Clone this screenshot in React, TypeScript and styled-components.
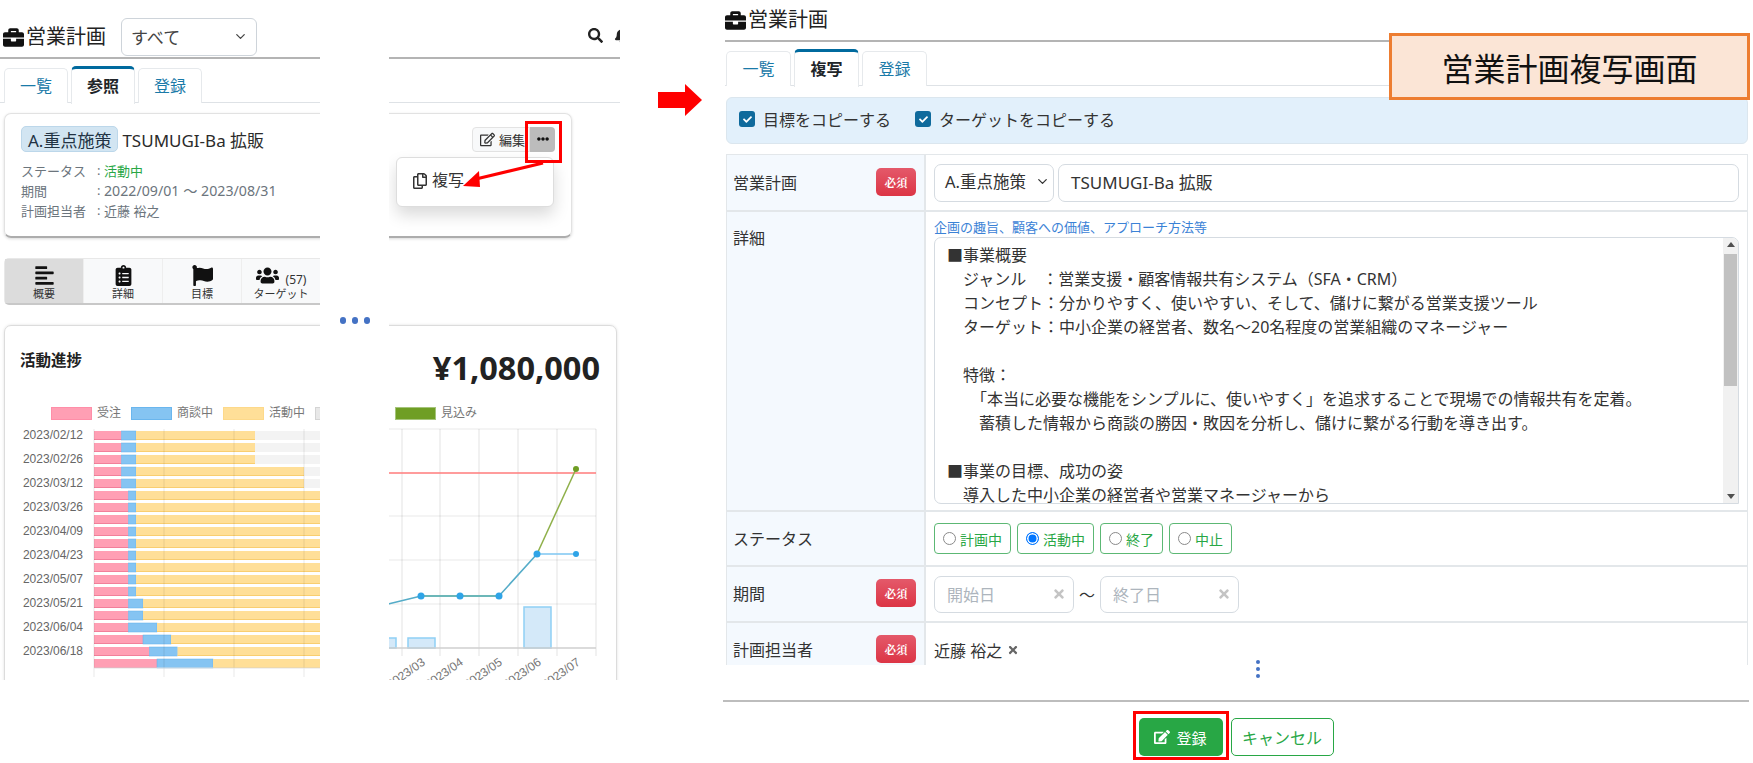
import React from "react";
import styled, { createGlobalStyle } from "styled-components";
import { ChevronDown } from "lucide-react";
import {
  FaBriefcase, FaSearch, FaBell, FaRegEdit, FaEllipsisH, FaRegCopy, FaAlignLeft,
  FaClipboardList, FaFlag, FaUsers, FaTimes, FaEdit, FaCheck,
} from "react-icons/fa";

const sans = `"Noto Sans", "Noto Sans CJK JP", sans-serif`;

const Global = createGlobalStyle`
  html, body { margin: 0; padding: 0; background: #fff; }
  body { font-family: ${sans}; color: #212529; width: 1753px; height: 763px; overflow: hidden; }
  * { box-sizing: border-box; }
`;

const Page = styled.div`
  position: relative; display: flex; align-items: flex-start; width: 1753px; height: 763px; overflow: hidden;
`;
const LeftScreen = styled.section`
  width: 620px; height: 680px; flex: none; overflow: hidden;
`;
const RightScreen = styled.section`
  width: 1025px; margin-left: 105px; flex: none;
`;

const Header = styled.header<{ $h: number; $pt?: number }>`
  height: ${(p) => p.$h}px; display: flex; align-items: center; border-bottom: 2px solid #b4b4b4; position: relative;
  padding-top: ${(p) => p.$pt ?? 0}px;
`;
const LeftTitleSlot = styled.div`
  margin-left: 3px;
`;
const Title = styled.h1`
  margin: 0; display: flex; align-items: center; gap: 2px; font-size: 20px; font-weight: 400; line-height: 24px; color: #222;
  svg { font-size: 21px; color: #111; }
`;
const Select = styled.div`
  margin-left: 15px; width: 136px; height: 38px; border: 1px solid #ced4da; border-radius: 6px; display: flex; align-items: center;
  justify-content: space-between; padding: 0 8px 2px 9px; font-size: 17px; color: #444;
`;
const HeaderIcons = styled.div`
  position: absolute; right: -9px; top: 28px; display: flex; gap: 11px; font-size: 15px; color: #222;
`;
const Tabs = styled.nav<{ $top: number; $left: number; $w: number }>`
  display: flex; gap: 3px; margin-top: ${(p) => p.$top}px; padding-left: ${(p) => p.$left}px;
  border-bottom: 1px solid #dee2e6; height: 35px;
  & > * { width: ${(p) => p.$w}px; }
`;
const Tab = styled.div<{ $active?: boolean }>`
  height: 35px; display: flex; align-items: center; justify-content: center; font-size: 16px; background: #fff; padding-bottom: 3px;
  border: 1px solid #e6e9ec; border-bottom: none; border-radius: 5px 5px 0 0;
  ${(p) => p.$active
    ? `color:#212529;font-weight:700;border-top:3px solid #006a9e;margin-top:-2px;height:38px;`
    : `color:#1a7aa8;`}
`;

const Card = styled.div`
  position: relative; margin: 10px 0 0 4px; width: 568px; height: 125px; padding: 12px 16px;
  border: 1px solid #e2e2e2; border-bottom: 2px solid #adadad; border-radius: 7px; box-shadow: 0 1px 3px rgba(0,0,0,.15);
`;
const CardTop = styled.div`
  display: flex; align-items: center; height: 26px;
`;
const Category = styled.span`
  height: 26px; padding: 0 6px; display: flex; align-items: center; background: #d2e5f2; border: 1px solid #bcd7ea;
  border-radius: 5px; font-size: 17px; color: #234; margin-right: 4px;
`;
const PlanName = styled.span`
  font-size: 17px; color: #2b2b2b;
`;
const CardActions = styled.div`
  margin-left: auto; display: flex; height: 25px; align-items: stretch;
`;
const EditButton = styled.span`
  width: 58px; display: flex; align-items: center; gap: 4px; padding-left: 7px; background: #f8f9fa; border: 1px solid #e3e3e3;
  border-radius: 4px 0 0 4px; font-size: 13px; color: #333; white-space: nowrap; overflow: hidden;
  svg { font-size: 15px; flex: none; }
`;
const MoreButton = styled.span`
  width: 25px; display: flex; align-items: center; justify-content: center; background: #bcbcbc; border-radius: 0 4px 4px 0; color: #111; font-size: 12px;
`;
const MetaGrid = styled.dl`
  margin: 8px 0 0; display: grid; grid-template-columns: 76px 7px 1fr; grid-auto-rows: 20px; align-items: center; font-size: 13px; color: #6c757d;
  dt, dd { margin: 0; white-space: nowrap; }
`;
const Active = styled.span`
  color: #28a745;
`;
const DateRange = styled.span`
  font-size: 14.2px;
`;
const Menu = styled.div`
  position: absolute; left: 391px; top: 43px; width: 158px; height: 50px; background: #fff; border: 1px solid #ddd; border-radius: 6px;
  box-shadow: 0 8px 16px rgba(0,0,0,.15); display: flex; align-items: flex-start; gap: 4px; padding: 13px 15px; font-size: 16px; line-height: 18px; color: #333;
  svg { font-size: 16px; margin-top: 2px; }
`;

const MetricBar = styled.div`
  margin: 20px 0 0 4px; width: 330px; height: 47px; display: flex; background: #f8f9fa; border: 1px solid #e8e8e8; border-bottom: 2px solid #c8c8c8; border-radius: 5px;
`;
const MetricItem = styled.div<{ $active?: boolean }>`
  width: 79px; display: flex; flex-direction: column; align-items: center; padding-top: 6px; font-size: 11px; line-height: 14px; color: #333;
  background: ${(p) => (p.$active ? "#dcdcdc" : "transparent")};
  border-right: 1px solid #eee;
  svg { font-size: 21px; color: #111; margin-bottom: 1px; }
`;
const MetricIconLine = styled.span`
  height: 22px; display: flex; align-items: flex-end; gap: 7px; font-size: 12px; color: #333; svg { font-size: 23px; margin-bottom: 0; }
`;

const ChartCard = styled.div`
  margin: 20px 0 0 4px; width: 613px; height: 400px; border: 1px solid #dcdcdc; border-radius: 7px; box-shadow: 0 0 3px rgba(0,0,0,.12);
`;
const ChartHead = styled.div`
  display: flex; justify-content: space-between; align-items: flex-start; padding: 22px 16px 0 15px;
`;
const ChartTitle = styled.h2`
  margin: 2px 0 0; font-size: 15.5px; line-height: 20px; font-weight: 700; color: #222;
`;
const Amount = styled.div`
  font-family: "Open Sans", "Noto Sans", sans-serif; font-size: 32.5px; line-height: 40px; font-weight: 700; color: #222;
`;
const Legend = styled.div`
  display: flex; gap: 10px; margin: 18px 0 4px 46px; height: 14px; white-space: nowrap;
`;
const LegendItem = styled.span`
  display: flex; align-items: center; gap: 5px; font-size: 12px; line-height: 14px; color: #777;
`;
const Swatch = styled.i<{ $bg: string; $bd: string }>`
  width: 41px; height: 13px; background: ${(p) => p.$bg}; border: 1.5px solid ${(p) => p.$bd}; display: block;
`;
const ChartSvg = styled.svg`
  display: block; margin-left: -5px;
`;

const GapMask = styled.div`
  position: absolute; left: 320px; top: 0; width: 69px; height: 763px; background: #fff; display: flex; justify-content: center; gap: 6px; padding-top: 317px;
`;
const BlueDot = styled.i`
  width: 6px; height: 7px; border-radius: 3px; background: #4472c4; display: block;
`;

const Notice = styled.div`
  margin-top: 11px; height: 47px; margin-left: 1px; width: 1022px; background: #e2f0fb; border: 1px solid #dbe6ee; border-radius: 6px;
  display: flex; align-items: center; padding: 0 0 3px 12px; gap: 24px;
`;
const CheckLabel = styled.label`
  display: flex; align-items: center; gap: 8px; font-size: 16px; color: #333;
`;
const CheckBox = styled.span`
  width: 16px; height: 16px; border-radius: 3px; background: #0f6a9c; display: flex; align-items: center; justify-content: center; color: #fff; font-size: 9px;
`;
const FormClip = styled.div`
  margin: 10px 0 0 1px; width: 1022px; height: 511px; overflow: hidden; border: 1px solid #e3e7ea; border-bottom: none;
`;
const Row = styled.div<{ $h: number }>`
  display: flex; height: ${(p) => p.$h}px; border-bottom: 2px solid #e3e7ea;
`;
const LabelCell = styled.div<{ $top?: boolean }>`
  width: 199px; flex: none; background: #f4f9fe; border-right: 2px solid #e3e7ea; padding: ${(p) => (p.$top ? "13px" : "0")} 8px 2px 6px;
  display: flex; align-items: ${(p) => (p.$top ? "flex-start" : "center")}; justify-content: space-between; font-size: 16px; color: #333;
`;
const Required = styled.span`
  width: 40px; height: 28px; border-radius: 5px; display: flex; align-items: center; justify-content: center; color: #fff; font-size: 11.5px; font-weight: 700;
  font-family: "Noto Serif CJK JP", "Noto Sans CJK JP", serif; background: linear-gradient(#e4596a, #dc3545);
`;
const FieldCell = styled.div<{ $col?: boolean }>`
  flex: 1; min-width: 0; padding: 0 8px; display: flex; gap: 4px; color: #333; font-size: 16px;
  flex-direction: ${(p) => (p.$col ? "column" : "row")}; align-items: ${(p) => (p.$col ? "stretch" : "center")};
`;
const Field = styled.div<{ $w?: number; $grow?: boolean }>`
  height: 38px; border: 1.5px solid #d5dbe1; border-radius: 7px; display: flex; align-items: center; justify-content: space-between;
  padding: 0 12px 3px; font-size: 17px; color: #333; white-space: nowrap;
  ${(p) => p.$w && `width:${p.$w}px;`}
  ${(p) => p.$grow && `flex:1;`}
`;
const CategorySelect = styled(Field)`
  padding: 0 3px 3px 10px; font-size: 16.5px;
`;
const Hint = styled.div`
  font-size: 13px; line-height: 18px; color: #3b82d6; margin-top: 6px;
`;
const Notes = styled.div`
  position: relative; height: 267px; margin-top: -3px; border: 1.5px solid #d5dbe1; border-bottom-width: 1px; border-radius: 7px 7px 0 7px; padding: 5px 0 0 12px;
  overflow: hidden; font-size: 16px; line-height: 24px; color: #333; white-space: pre;
`;
const Scroll = styled.div`
  position: absolute; right: 0; top: 0; bottom: 0; width: 15px; background: #f1f1f1; display: flex; flex-direction: column; align-items: center; justify-content: space-between; padding: 4px 0;
`;
const ScrollArrow = styled.i<{ $down?: boolean }>`
  width: 0; height: 0; border-left: 4px solid transparent; border-right: 4px solid transparent;
  ${(p) => (p.$down ? "border-top: 5px solid #505050;" : "border-bottom: 5px solid #505050;")}
`;
const ScrollThumb = styled.i`
  position: absolute; left: 1px; right: 1px; top: 16px; height: 132px; background: #c1c1c1;
`;
const StatusGroup = styled.div`
  display: flex; gap: 6px;
`;
const StatusOption = styled.span`
  height: 31px; display: flex; align-items: center; gap: 4px; padding: 0 8px; border: 1.5px solid #5cb874; border-radius: 4px; font-size: 14px; color: #28a745; white-space: nowrap;
`;
const Radio = styled.i<{ $on?: boolean }>`
  width: 13px; height: 13px; border-radius: 50%; display: block; background: #fff;
  border: 1px solid ${(p) => (p.$on ? "#0075ff" : "#8a8a8a")};
  ${(p) => p.$on && "box-shadow: inset 0 0 0 1.5px #fff; background: #0075ff;"}
`;
const DateField = styled(Field)<{ $dw: number }>`
  width: ${(p) => p.$dw}px; height: 37px; color: #adb5bd; padding: 0 7px 0 12px; font-size: 16px;
  svg { font-size: 14px; color: #c4c4c4; }
`;
const Tilde = styled.span`
  color: #333; width: 18px; text-align: center; font-size: 16px;
`;
const Assignee = styled.span`
  display: flex; align-items: center; gap: 5px;
  svg { font-size: 12px; color: #666; }
`;
const VDots = styled.div`
  position: relative; height: 41px; margin-top: -6px; display: flex; flex-direction: column; align-items: center; gap: 3px; padding-top: 1px; width: 1065px;
`;
const VDot = styled.i`
  width: 4px; height: 4px; border-radius: 50%; background: #4472c4; display: block;
`;
const Footer = styled.footer`
  border-top: 2px solid #bdbdbd; padding-top: 16px; display: flex; justify-content: center; gap: 8px; width: 1026px; margin-left: -2px;
`;
const SaveButton = styled.span`
  width: 84px; height: 38px; background: #28a745; color: #fff; border-radius: 5px; display: flex; align-items: center; justify-content: center; gap: 6px; font-size: 15px;
  svg { font-size: 16px; }
`;
const CancelButton = styled.span`
  width: 103px; height: 38px; background: #fff; color: #28a745; border: 1px solid #28a745; border-radius: 5px; display: flex; align-items: center; justify-content: center; font-size: 16px;
`;
const RedFrame = styled.div<{ $x: number; $y: number; $w: number; $h: number }>`
  position: absolute; left: ${(p) => p.$x}px; top: ${(p) => p.$y}px; width: ${(p) => p.$w}px; height: ${(p) => p.$h}px; border: 3px solid #f00; pointer-events: none;
`;
const Callout = styled.div`
  position: absolute; left: 1389px; top: 33px; width: 361px; height: 67px; background: #fbe5d6; border: 3px solid #ed7d31; display: flex; align-items: center; justify-content: center;
  font-size: 32px; color: #111;
`;
const ArrowLayer = styled.svg`
  position: absolute; left: 0; top: 0; pointer-events: none;
`;

type Bar = { r: number; b: number; y?: number };
const rows: Bar[] = [
  { r: 121.5, b: 136, y: 255 }, { r: 121.5, b: 136, y: 255 }, { r: 121.5, b: 136, y: 255 },
  { r: 121.5, b: 136, y: 304 }, { r: 121.5, b: 136, y: 304 },
  ...Array.from({ length: 9 }, () => ({ r: 128.5, b: 136 })),
  { r: 128.5, b: 143 }, { r: 128.5, b: 143 }, { r: 128.5, b: 157 },
  { r: 143, b: 171 }, { r: 149.5, b: 177.5 }, { r: 157, b: 213 },
];
const dates = ["02/12", "02/26", "03/12", "03/26", "04/09", "04/23", "05/07", "05/21", "06/04", "06/18"];
const vGrid = [402, 440, 479, 518, 557, 596];
const hGrid = [430, 517, 561, 605];
const gGrid = [94, 164, 234, 304];
const months = [["03", 426], ["04", 464], ["05", 503], ["06", 542], ["07", 581]] as const;
const points: [number, number][] = [[421, 597], [460, 597], [499, 597], [537, 555]];

function ProgressChart() {
  return (
    <ChartSvg width="620" height="258" viewBox="0 425 620 258" fontFamily="'Liberation Sans', sans-serif">
      {rows.map((row, i) => {
        const y = 432 + i * 12;
        return (
          <g key={i}>
            <rect x="94" y={y} width={row.r - 94} height="9" fill="#ff9fb4" />
            <rect x="94" y={y + 8} width={row.r - 94} height="1" fill="#f27f9a" />
            <rect x={row.r} y={y} width={row.b - row.r} height="9" fill="#85c4f2" stroke="#5fb0ec" strokeWidth=".5" />
            <rect x={row.b} y={y} width={(row.y ?? 320) - row.b} height="9" fill="#ffdf98" />
            <rect x={row.b} y={y + 8} width={(row.y ?? 320) - row.b} height="1" fill="#f9ce70" />
            {row.y && <rect x={row.y} y={y} width={320 - row.y} height="9" fill="#f3f3f3" />}
          </g>
        );
      })}
      {dates.map((d, i) => (
        <text key={d} x="83" y={440 + i * 24} textAnchor="end" fontSize="12" fill="#666">2023/{d}</text>
      ))}
      {gGrid.map((x) => <line key={x} x1={x} x2={x} y1="430" y2="678" stroke="#000" strokeOpacity=".09" />)}
      <line x1="94" x2="320" y1="669" y2="669" stroke="#e3e3e3" />

      {vGrid.map((x) => <line key={x} x1={x} x2={x} y1="430" y2="657" stroke="#000" strokeOpacity=".11" />)}
      {hGrid.map((y) => <line key={y} x1="389" x2="596" y1={y} y2={y} stroke="#000" strokeOpacity=".09" />)}
      <rect x="384" y="639" width="12" height="10" fill="#d4e9f9" stroke="#8fcff5" strokeWidth="1.5" />
      <rect x="408" y="639" width="27" height="10" fill="#d4e9f9" stroke="#8fcff5" strokeWidth="1.5" />
      <rect x="524" y="608" width="27" height="41" fill="#d4e9f9" stroke="#8fcff5" strokeWidth="1.5" />
      <line x1="389" x2="596" y1="649" y2="649" stroke="#cfcfcf" strokeWidth="1.5" />
      <line x1="389" x2="596" y1="474" y2="474" stroke="#ff7b7b" strokeWidth="1.5" />
      <polyline points="537,555 576,470" fill="none" stroke="#8fb04a" strokeWidth="1.5" />
      <polyline points="537,555 576,555" fill="none" stroke="#7cc6f2" strokeWidth="1.5" />
      <polyline points="380,607 421,597 499,597 537,555" fill="none" stroke="#55acc8" strokeWidth="1.6" />
      <line x1="421" x2="499" y1="597" y2="597" stroke="#6cb7b8" strokeWidth="2" />
      {points.map(([x, y]) => <circle key={x} cx={x} cy={y} r="3.5" fill="#2fa4e7" />)}
      <circle cx="576" cy="555" r="3" fill="#2fa4e7" />
      <circle cx="576" cy="470" r="3" fill="#6f9e24" />
      {months.map(([m, x]) => (
        <text key={m} x={x} y="665" textAnchor="end" fontSize="12" fill="#777" transform={`rotate(-35 ${x} 665)`}>2023/{m}</text>
      ))}
    </ChartSvg>
  );
}

const notes = [
  "■事業概要",
  "　ジャンル　：営業支援・顧客情報共有システム（SFA・CRM）",
  "　コンセプト：分かりやすく、使いやすい、そして、儲けに繋がる営業支援ツール",
  "　ターゲット：中小企業の経営者、数名～20名程度の営業組織のマネージャー",
  "",
  "　特徴：",
  "　　「本当に必要な機能をシンプルに、使いやすく」を追求することで現場での情報共有を定着。",
  "　　蓄積した情報から商談の勝因・敗因を分析し、儲けに繋がる行動を導き出す。",
  "",
  "■事業の目標、成功の姿",
  "　導入した中小企業の経営者や営業マネージャーから",
].join("\n");

export default function App() {
  return (
    <Page>
      <Global />
      <LeftScreen>
        <Header $h={59} $pt={17}>
          <LeftTitleSlot><Title><FaBriefcase />営業計画</Title></LeftTitleSlot>
          <Select>すべて<ChevronDown size={15} strokeWidth={2} color="#444" /></Select>
          <HeaderIcons><FaSearch /><FaBell /></HeaderIcons>
        </Header>
        <Tabs $top={9} $left={4} $w={64}>
          <Tab>一覧</Tab><Tab $active>参照</Tab><Tab>登録</Tab>
        </Tabs>
        <Card>
          <CardTop>
            <Category>A.重点施策</Category>
            <PlanName>TSUMUGI-Ba 拡販</PlanName>
            <CardActions>
              <EditButton><FaRegEdit />編集</EditButton>
              <MoreButton><FaEllipsisH /></MoreButton>
            </CardActions>
          </CardTop>
          <MetaGrid>
            <dt>ステータス</dt><dd>:</dd><dd><Active>活動中</Active></dd>
            <dt>期間</dt><dd>:</dd><dd><DateRange>2022/09/01 ～ 2023/08/31</DateRange></dd>
            <dt>計画担当者</dt><dd>:</dd><dd>近藤 裕之</dd>
          </MetaGrid>
          <Menu><FaRegCopy />複写</Menu>
        </Card>
        <MetricBar>
          <MetricItem $active><FaAlignLeft />概要</MetricItem>
          <MetricItem><FaClipboardList />詳細</MetricItem>
          <MetricItem><FaFlag />目標</MetricItem>
          <MetricItem><MetricIconLine><FaUsers />(57)</MetricIconLine>ターゲット</MetricItem>
        </MetricBar>
        <ChartCard>
          <ChartHead>
            <ChartTitle>活動進捗</ChartTitle>
            <Amount>¥1,080,000</Amount>
          </ChartHead>
          <Legend>
            <LegendItem><Swatch $bg="#ff9fb4" $bd="#ff8ea8" />受注</LegendItem>
            <LegendItem><Swatch $bg="#85c4f2" $bd="#6ab6ee" />商談中</LegendItem>
            <LegendItem><Swatch $bg="#ffdf98" $bd="#fdd98a" />活動中</LegendItem>
            <LegendItem><Swatch $bg="#e8e8e8" $bd="#d4d4d4" />失注</LegendItem>
            <LegendItem><Swatch $bg="#6f9e24" $bd="#a5c47a" />見込み</LegendItem>
          </Legend>
          <ProgressChart />
        </ChartCard>
      </LeftScreen>

      <RightScreen>
        <Header $h={42}>
          <Title><FaBriefcase />営業計画</Title>
        </Header>
        <Tabs $top={9} $left={1} $w={65}>
          <Tab>一覧</Tab><Tab $active>複写</Tab><Tab>登録</Tab>
        </Tabs>
        <Notice>
          <CheckLabel><CheckBox><FaCheck /></CheckBox>目標をコピーする</CheckLabel>
          <CheckLabel><CheckBox><FaCheck /></CheckBox>ターゲットをコピーする</CheckLabel>
        </Notice>
        <FormClip>
          <Row $h={57}>
            <LabelCell>営業計画<Required>必須</Required></LabelCell>
            <FieldCell>
              <CategorySelect $w={120}>A.重点施策<ChevronDown size={15} color="#333" /></CategorySelect>
              <Field $grow>TSUMUGI-Ba 拡販</Field>
            </FieldCell>
          </Row>
          <Row $h={300}>
            <LabelCell $top>詳細</LabelCell>
            <FieldCell $col>
              <Hint>企画の趣旨、顧客への価値、アプローチ方法等</Hint>
              <Notes>
                {notes}
                <Scroll><ScrollArrow /><ScrollThumb /><ScrollArrow $down /></Scroll>
              </Notes>
            </FieldCell>
          </Row>
          <Row $h={55}>
            <LabelCell>ステータス</LabelCell>
            <FieldCell>
              <StatusGroup>
                <StatusOption><Radio />計画中</StatusOption>
                <StatusOption><Radio $on />活動中</StatusOption>
                <StatusOption><Radio />終了</StatusOption>
                <StatusOption><Radio />中止</StatusOption>
              </StatusGroup>
            </FieldCell>
          </Row>
          <Row $h={56}>
            <LabelCell>期間<Required>必須</Required></LabelCell>
            <FieldCell>
              <DateField $dw={140}>開始日<FaTimes /></DateField>
              <Tilde>～</Tilde>
              <DateField $dw={139}>終了日<FaTimes /></DateField>
            </FieldCell>
          </Row>
          <Row $h={55}>
            <LabelCell>計画担当者<Required>必須</Required></LabelCell>
            <FieldCell>
              <Assignee>近藤 裕之<FaTimes /></Assignee>
            </FieldCell>
          </Row>
        </FormClip>
        <VDots><VDot /><VDot /><VDot /></VDots>
        <Footer>
          <SaveButton><FaEdit />登録</SaveButton>
          <CancelButton>キャンセル</CancelButton>
        </Footer>
      </RightScreen>

      <GapMask><BlueDot /><BlueDot /><BlueDot /></GapMask>
      <RedFrame $x={525} $y={121} $w={37} $h={42} />
      <RedFrame $x={1133} $y={711} $w={96} $h={49} />
      <Callout>営業計画複写画面</Callout>
      <ArrowLayer width="1753" height="763" viewBox="0 0 1753 763">
        <line x1="543" y1="163" x2="476" y2="179" stroke="#f00" strokeWidth="3" />
        <polygon points="463,186 479,171 480,187" fill="#f00" />
        <polygon points="658,92 685,92 685,84 702,100 685,116 685,108 658,108" fill="#f00" />
      </ArrowLayer>
    </Page>
  );
}
